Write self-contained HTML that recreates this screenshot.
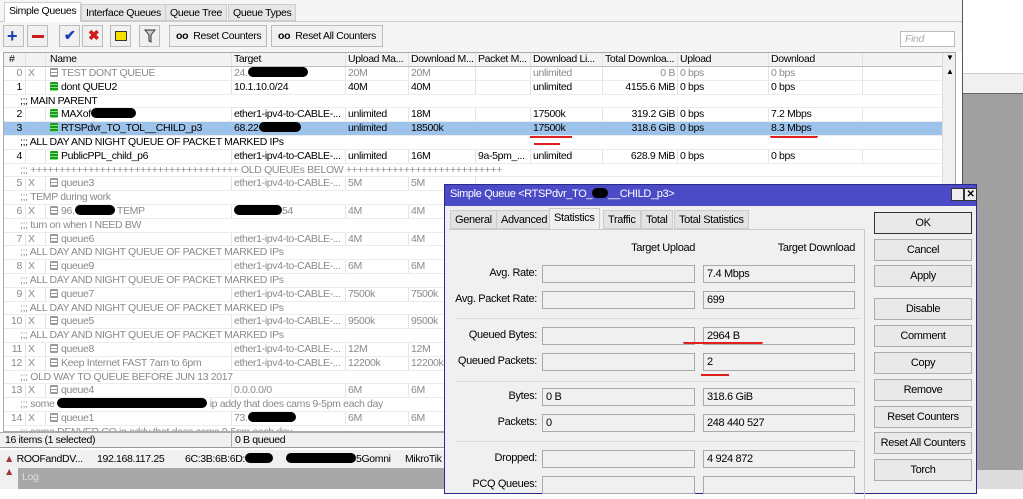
<!DOCTYPE html>
<html><head><meta charset="utf-8"><style>
*{margin:0;padding:0;box-sizing:border-box}
body{width:1023px;height:489px;overflow:hidden;background:#fff;font-family:"Liberation Sans",sans-serif;font-size:10.5px;color:#000;position:relative;letter-spacing:-0.35px}
.a{position:absolute;white-space:nowrap}
.tab{position:absolute;top:4px;height:17px;background:#e6e6e6;border:1px solid #ccc;padding:2px 4px;font-size:10.5px;white-space:nowrap}
.tb{position:absolute;top:25px;height:22px;border:1px solid #bbb;background:#f0f0f0;white-space:nowrap}
.list{position:absolute;left:3px;top:52px;width:953px;height:380px;border:1px solid #aaa;overflow:hidden;background:#fff}
.r{position:relative;height:13.8px;border-bottom:1px solid #ececec;line-height:13px;white-space:nowrap}
.r span{position:absolute;top:0;overflow:hidden;white-space:nowrap;border-right:1px solid #e4e4e4;height:13px;padding-left:2px}
.hd{height:14px;background:#f3f3f3;border-bottom:1px solid #bbb}
.c0{left:0;width:22px;text-align:right;padding-right:3px}
.c1{left:22px;width:20px}
.c2{left:42px;width:186px;padding-left:4px!important}
.c3{left:228px;width:114px}
.c4{left:342px;width:63px}
.c5{left:405px;width:67px}
.c6{left:472px;width:55px}
.c7{left:527px;width:72px}
.c8{left:599px;width:75px;text-align:right;padding-right:2px}
.c9{left:674px;width:91px}
.c10{left:765px;width:94px}
.c11{left:859px;width:80px}
.hd span{background:#f3f3f3}
.d{color:#8a8a8a}
.sel{background:#9dc3ea}
.sel span{border-right-color:#9dc3ea}
.cm{padding-left:16px;line-height:13px}
.ic{display:inline-block;width:8px;height:9px;margin-right:3px;vertical-align:-1px;background:repeating-linear-gradient(#1c9a1c 0 2px,#7ce07c 2px 3px);border-radius:1px}
.ic.g{background:repeating-linear-gradient(#999 0 1px,#fff 1px 3px);border:1px solid #999}
.bk{display:inline-block;background:#000;border-radius:6px;height:10px;vertical-align:-1px}
.dlg{position:absolute;left:444px;top:184px;width:533px;height:310px;background:#f0f0f0;border:1px solid #2a2a8a}
.tt{position:absolute;left:0;top:0;width:100%;height:21px;background:#4b4bc8;color:#fff;padding:3px 5px;font-size:11px}
.dt{position:absolute;top:25px;height:19px;background:#e3e3e3;border:1px solid #ccc;padding:3px 4px;font-size:11px}
.lb{position:absolute;width:120px;text-align:right;left:0;font-size:11px}
.f{position:absolute;height:18px;background:#f0f0f0;border:1px solid #aaa;padding:2px 3px;font-size:11px}
.bt{position:absolute;left:429px;width:98px;height:22px;border:1px solid #adadad;background:#e9e9e9;text-align:center;line-height:20px;font-size:11px}
.sep{position:absolute;left:10px;width:406px;height:1px;background:#ddd}
</style></head><body>
<div class="a" style="left:962px;top:0;width:1px;height:489px;background:#555"></div>
<div class="a" style="left:963px;top:73px;width:60px;height:20px;background:#f0f0f0;border-top:1px solid #ccc"></div>
<div class="a" style="left:963px;top:93px;width:60px;height:377px;background:#a0a0a0;border-top:1px solid #666"></div>
<div class="a" style="left:963px;top:470px;width:60px;height:19px;background:#dcdcdc"></div>
<div class="a" style="left:0;top:0;width:962px;height:52px;background:#f5f5f5"></div>

<div class="a" style="left:0;top:21px;width:962px;height:1px;background:#ccc"></div>
<div class="tab" style="left:4px;top:2px;height:20px;background:#fff;border-bottom:none">Simple Queues</div>
<div class="tab" style="left:81px">Interface Queues</div>
<div class="tab" style="left:165px">Queue Tree</div>
<div class="tab" style="left:228px">Queue Types</div>

<div class="tb" style="left:3px;width:21px"><span class="a" style="left:3px;top:1px;color:#1a3fb0;font-size:18px;font-weight:bold;line-height:18px">+</span></div>
<div class="tb" style="left:27px;width:21px"><span class="a" style="left:4px;top:9px;width:12px;height:3px;background:#c81e1e"></span></div>
<div class="tb" style="left:59px;width:21px"><span class="a" style="left:4px;top:1px;color:#1a3fb0;font-size:14px;font-weight:bold">✔</span></div>
<div class="tb" style="left:82px;width:21px"><span class="a" style="left:5px;top:1px;color:#d01c1c;font-size:14px;font-weight:bold">✖</span></div>
<div class="tb" style="left:110px;width:21px"><span class="a" style="left:4px;top:5px;width:12px;height:10px;background:#f5e000;border:1px solid #333"></span></div>
<div class="tb" style="left:139px;width:21px"><svg class="a" style="left:4px;top:3px" width="12" height="14"><path d="M1 1H11L7 6V13L5 12V6Z" fill="#ccc" stroke="#333"/></svg></div>
<div class="tb" style="left:169px;width:98px;padding:4px 6px"><b>oo</b>&nbsp; Reset Counters</div>
<div class="tb" style="left:271px;width:112px;padding:4px 6px"><b>oo</b>&nbsp; Reset All Counters</div>
<div class="a" style="left:900px;top:31px;width:55px;height:16px;border:1px solid #bbb;background:#fff;color:#aaa;font-style:italic;padding:1px 4px">Find</div>

<div class="list">
<div class="r hd"><span class="c0" style="text-align:left;padding-left:5px">#</span><span class="c1"></span><span class="c2">Name</span><span class="c3">Target</span><span class="c4">Upload Ma...</span><span class="c5">Download M...</span><span class="c6">Packet M...</span><span class="c7">Download Li...</span><span class="c8" style="text-align:left">Total Downloa...</span><span class="c9">Upload</span><span class="c10">Download</span><span class="c11"></span></div>
<div class="r d"><span class="c0">0</span><span class="c1">X</span><span class="c2"><i class="ic g"></i>TEST DONT QUEUE</span><span class="c3">24.<i class="bk" style="width:60px"></i></span><span class="c4">20M</span><span class="c5">20M</span><span class="c6"></span><span class="c7">unlimited</span><span class="c8">0 B</span><span class="c9">0 bps</span><span class="c10">0 bps</span><span class="c11"></span></div>
<div class="r"><span class="c0">1</span><span class="c1"></span><span class="c2"><i class="ic"></i>dont QUEU2</span><span class="c3">10.1.10.0/24</span><span class="c4">40M</span><span class="c5">40M</span><span class="c6"></span><span class="c7">unlimited</span><span class="c8">4155.6 MiB</span><span class="c9">0 bps</span><span class="c10">0 bps</span><span class="c11"></span></div>
<div class="r cm">;;; MAIN PARENT</div>
<div class="r"><span class="c0">2</span><span class="c1"></span><span class="c2"><i class="ic"></i>MAXof<i class="bk" style="width:45px"></i></span><span class="c3">ether1-ipv4-to-CABLE-...</span><span class="c4">unlimited</span><span class="c5">18M</span><span class="c6"></span><span class="c7">17500k</span><span class="c8">319.2 GiB</span><span class="c9">0 bps</span><span class="c10">7.2 Mbps</span><span class="c11"></span></div>
<div class="r sel"><span class="c0">3</span><span class="c1"></span><span class="c2"><i class="ic"></i>RTSPdvr_TO_TOL__CHILD_p3</span><span class="c3">68.22<i class="bk" style="width:42px"></i></span><span class="c4">unlimited</span><span class="c5">18500k</span><span class="c6"></span><span class="c7">17500k</span><span class="c8">318.6 GiB</span><span class="c9">0 bps</span><span class="c10">8.3 Mbps</span><span class="c11"></span></div>
<div class="r cm">;;; ALL DAY AND NIGHT QUEUE OF PACKET MARKED IPs</div>
<div class="r"><span class="c0">4</span><span class="c1"></span><span class="c2"><i class="ic"></i>PublicPPL_child_p6</span><span class="c3">ether1-ipv4-to-CABLE-...</span><span class="c4">unlimited</span><span class="c5">16M</span><span class="c6">9a-5pm_...</span><span class="c7">unlimited</span><span class="c8">628.9 MiB</span><span class="c9">0 bps</span><span class="c10">0 bps</span><span class="c11"></span></div>
<div class="r cm d">;;; ++++++++++++++++++++++++++++++++++++ OLD QUEUEs BELOW +++++++++++++++++++++++++++</div>
<div class="r d"><span class="c0">5</span><span class="c1">X</span><span class="c2"><i class="ic g"></i>queue3</span><span class="c3">ether1-ipv4-to-CABLE-...</span><span class="c4">5M</span><span class="c5">5M</span></div>
<div class="r cm d">;;; TEMP during work</div>
<div class="r d"><span class="c0">6</span><span class="c1">X</span><span class="c2"><i class="ic g"></i>96.<i class="bk" style="width:40px"></i> TEMP</span><span class="c3"><i class="bk" style="width:48px"></i>54</span><span class="c4">4M</span><span class="c5">4M</span></div>
<div class="r cm d">;;; turn on when I NEED BW</div>
<div class="r d"><span class="c0">7</span><span class="c1">X</span><span class="c2"><i class="ic g"></i>queue6</span><span class="c3">ether1-ipv4-to-CABLE-...</span><span class="c4">4M</span><span class="c5">4M</span></div>
<div class="r cm d">;;; ALL DAY AND NIGHT QUEUE OF PACKET MARKED IPs</div>
<div class="r d"><span class="c0">8</span><span class="c1">X</span><span class="c2"><i class="ic g"></i>queue9</span><span class="c3">ether1-ipv4-to-CABLE-...</span><span class="c4">6M</span><span class="c5">6M</span></div>
<div class="r cm d">;;; ALL DAY AND NIGHT QUEUE OF PACKET MARKED IPs</div>
<div class="r d"><span class="c0">9</span><span class="c1">X</span><span class="c2"><i class="ic g"></i>queue7</span><span class="c3">ether1-ipv4-to-CABLE-...</span><span class="c4">7500k</span><span class="c5">7500k</span></div>
<div class="r cm d">;;; ALL DAY AND NIGHT QUEUE OF PACKET MARKED IPs</div>
<div class="r d"><span class="c0">10</span><span class="c1">X</span><span class="c2"><i class="ic g"></i>queue5</span><span class="c3">ether1-ipv4-to-CABLE-...</span><span class="c4">9500k</span><span class="c5">9500k</span></div>
<div class="r cm d">;;; ALL DAY AND NIGHT QUEUE OF PACKET MARKED IPs</div>
<div class="r d"><span class="c0">11</span><span class="c1">X</span><span class="c2"><i class="ic g"></i>queue8</span><span class="c3">ether1-ipv4-to-CABLE-...</span><span class="c4">12M</span><span class="c5">12M</span></div>
<div class="r d"><span class="c0">12</span><span class="c1">X</span><span class="c2"><i class="ic g"></i>Keep Internet FAST 7am to 6pm</span><span class="c3">ether1-ipv4-to-CABLE-...</span><span class="c4">12200k</span><span class="c5">12200k</span></div>
<div class="r cm d">;;; OLD WAY TO QUEUE BEFORE JUN 13 2017</div>
<div class="r d"><span class="c0">13</span><span class="c1">X</span><span class="c2"><i class="ic g"></i>queue4</span><span class="c3">0.0.0.0/0</span><span class="c4">6M</span><span class="c5">6M</span></div>
<div class="r cm d">;;; some <i class="bk" style="width:150px"></i> ip addy that does cams 9-5pm each day</div>
<div class="r d"><span class="c0">14</span><span class="c1">X</span><span class="c2"><i class="ic g"></i>queue1</span><span class="c3">73.<i class="bk" style="width:48px"></i></span><span class="c4">6M</span><span class="c5">6M</span></div>
<div class="r cm d">;;; some DENVER CO ip addy that does cams 9-5pm each day</div>
<div class="a" style="left:938px;top:0;width:14px;height:380px;background:#f0f0f0;border-left:1px solid #ddd"><span class="a" style="left:3px;top:0;font-size:8px">▼</span><span class="a" style="left:3px;top:14px;font-size:8px">▲</span></div>
</div>
<div class="a" style="left:530px;top:136px;width:42px;height:2px;background:#e02020"></div>
<div class="a" style="left:534px;top:143px;width:26px;height:2px;background:#e02020"></div>
<div class="a" style="left:770px;top:136px;width:48px;height:2px;background:#e02020;border-radius:0 0 6px 6px"></div>

<div class="a" style="left:0;top:432px;width:962px;height:16px;background:#f0f0f0;border-top:1px solid #aaa;border-bottom:1px solid #999"></div>
<div class="a" style="left:5px;top:434px">16 items (1 selected)</div>
<div class="a" style="left:231px;top:432px;width:1px;height:16px;background:#aaa"></div>
<div class="a" style="left:235px;top:434px">0 B queued</div>
<div class="a" style="left:0;top:450px;width:445px;height:39px;background:#f0f0f0"></div>
<div class="a" style="left:4px;top:453px"><span style="color:#a33">▲</span> ROOFandDV...</div>
<div class="a" style="left:97px;top:453px">192.168.117.25</div>
<div class="a" style="left:185px;top:453px">6C:3B:6B:6D:<i class="bk" style="width:28px"></i></div>
<div class="a" style="left:286px;top:453px"><i class="bk" style="width:70px"></i>5Gomni</div>
<div class="a" style="left:405px;top:453px">MikroTik</div>
<div class="a" style="left:4px;top:466px;color:#a33">▲</div>
<div class="a" style="left:18px;top:468px;width:427px;height:21px;background:#a8a8a8;color:#ddd;padding:3px 4px">Log</div>

<div class="dlg">
<div class="tt">Simple Queue &lt;RTSPdvr_TO_<i class="bk" style="width:16px;background:#000"></i>__CHILD_p3&gt;
<span class="a" style="left:506px;top:3px;width:13px;height:13px;background:#eee;border:1px solid #333"></span><span class="a" style="left:519px;top:3px;width:13px;height:13px;background:#eee;border:1px solid #333;color:#000;font-size:10px;line-height:11px;text-align:center;font-weight:bold">✕</span></div>
<div class="dt" style="left:5px">General</div>
<div class="dt" style="left:51px">Advanced</div>
<div class="dt" style="left:104px;top:23px;height:22px;background:#f0f0f0;border-bottom:none">Statistics</div>
<div class="dt" style="left:158px">Traffic</div>
<div class="dt" style="left:196px">Total</div>
<div class="dt" style="left:229px">Total Statistics</div>
<div class="a" style="left:4px;top:44px;width:415px;height:1px;background:#ccc"></div>
<div class="a" style="left:419px;top:44px;width:1px;height:270px;background:#ccc"></div>
<div class="a" style="left:155px;top:57px;width:95px;text-align:right;font-size:11px">Target Upload</div>
<div class="a" style="left:300px;top:57px;width:110px;text-align:right;font-size:11px">Target Download</div>
<div class="lb" style="top:82px;left:-28px">Avg. Rate:</div>
<div class="lb" style="top:108px;left:-28px">Avg. Packet Rate:</div>
<div class="sep" style="top:133px"></div>
<div class="lb" style="top:144px;left:-28px">Queued Bytes:</div>
<div class="lb" style="top:170px;left:-28px">Queued Packets:</div>
<div class="sep" style="top:196px"></div>
<div class="lb" style="top:205px;left:-28px">Bytes:</div>
<div class="lb" style="top:231px;left:-28px">Packets:</div>
<div class="sep" style="top:256px"></div>
<div class="lb" style="top:267px;left:-28px">Dropped:</div>
<div class="lb" style="top:293px;left:-28px">PCQ Queues:</div>
<div class="f" style="left:97px;top:80px;width:153px"></div><div class="f" style="left:258px;top:80px;width:152px">7.4 Mbps</div>
<div class="f" style="left:97px;top:106px;width:153px"></div><div class="f" style="left:258px;top:106px;width:152px">699</div>
<div class="f" style="left:97px;top:142px;width:153px"></div><div class="f" style="left:258px;top:142px;width:152px">2964 B</div>
<div class="f" style="left:97px;top:168px;width:153px"></div><div class="f" style="left:258px;top:168px;width:152px">2</div>
<div class="f" style="left:97px;top:203px;width:153px">0 B</div><div class="f" style="left:258px;top:203px;width:152px">318.6 GiB</div>
<div class="f" style="left:97px;top:229px;width:153px">0</div><div class="f" style="left:258px;top:229px;width:152px">248 440 527</div>
<div class="f" style="left:97px;top:265px;width:153px"></div><div class="f" style="left:258px;top:265px;width:152px">4 924 872</div>
<div class="f" style="left:97px;top:291px;width:153px"></div><div class="f" style="left:258px;top:291px;width:152px"></div>
<div class="a" style="left:238px;top:157px;width:80px;height:2px;background:#e02020;border-radius:0 0 8px 8px"></div>
<div class="a" style="left:256px;top:189px;width:28px;height:2px;background:#e02020"></div>
<div class="bt" style="top:27px;border:1px solid #333">OK</div>
<div class="bt" style="top:54px">Cancel</div>
<div class="bt" style="top:80px">Apply</div>
<div class="bt" style="top:113px">Disable</div>
<div class="bt" style="top:140px">Comment</div>
<div class="bt" style="top:167px">Copy</div>
<div class="bt" style="top:194px">Remove</div>
<div class="bt" style="top:221px">Reset Counters</div>
<div class="bt" style="top:247px">Reset All Counters</div>
<div class="bt" style="top:274px">Torch</div>
</div>
</body></html>
